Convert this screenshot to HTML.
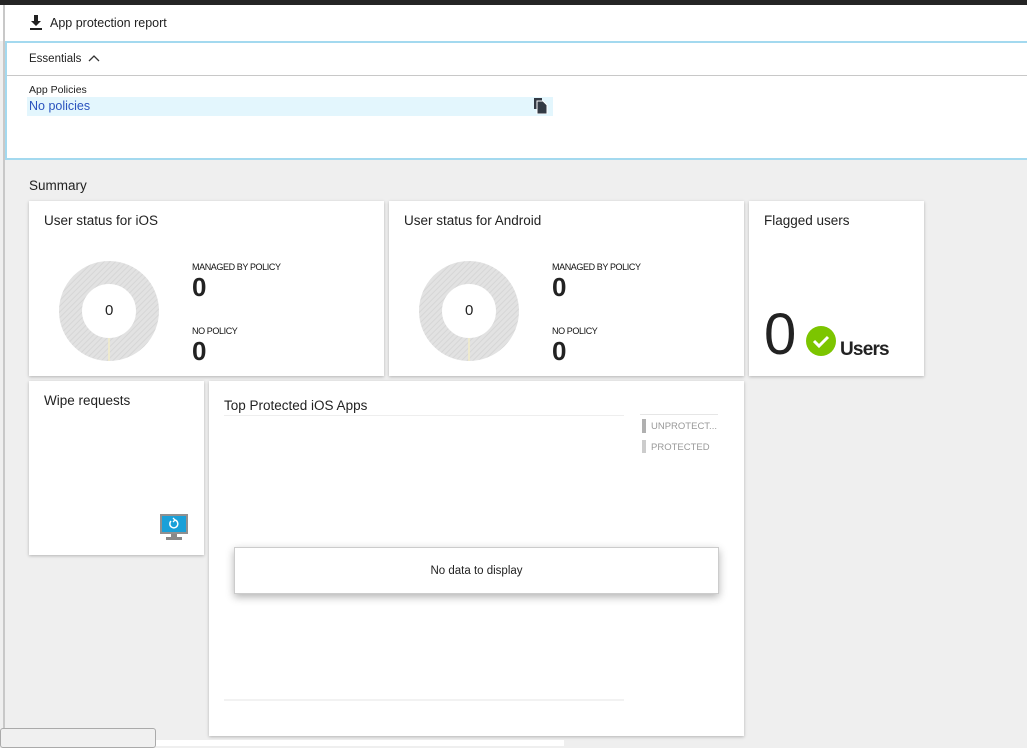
<!DOCTYPE html>
<html><head><meta charset="utf-8"><style>
*{box-sizing:border-box;margin:0;padding:0}
body{width:1027px;height:746px;overflow:hidden;background:#efefef;font-family:"Segoe UI","Liberation Sans",sans-serif;color:#222;position:relative}
.abs{position:absolute}
.card{position:absolute;background:#fff;box-shadow:0 1px 3px rgba(0,0,0,.25)}
.t{position:absolute;font-size:13.5px;color:#222}
.lbl{position:absolute;font-size:9px;letter-spacing:-.4px;color:#111}
.num{position:absolute;font-size:26px;font-weight:bold;color:#222;line-height:1}
</style></head><body>
<div class="abs" style="left:0;top:0;width:1027px;height:5px;background:#252525"></div>
<div class="abs" style="left:0;top:5px;width:1027px;height:36px;background:#fff"></div>
<div class="abs" style="left:3px;top:5px;width:2px;height:741px;background:#c8c8c8"></div>
<svg class="abs" style="left:29px;top:15px" width="14" height="16" viewBox="0 0 14 16"><path d="M5 0h4v6h3l-5 5-5-5h3z" fill="#222"/><rect x="1" y="13" width="12" height="2" fill="#222"/></svg>
<div class="t" style="left:50px;top:16px;font-size:12.5px">App protection report</div>
<div class="abs" style="left:5px;top:41px;width:1022px;height:119px;background:#fff;border:2px solid #a3d9ef;border-right:none"></div>
<div class="abs" style="left:7px;top:75px;width:1020px;height:1px;background:#c8c8c8"></div>
<div class="t" style="left:29px;top:53px;font-size:11.5px">Essentials</div>
<svg class="abs" style="left:88px;top:54px" width="12" height="8"><path d="M1 7L6 2l5 5" stroke="#333" stroke-width="1.3" fill="none"/></svg>
<div class="t" style="left:29px;top:84px;font-size:10.5px">App Policies</div>
<div class="abs" style="left:27px;top:97px;width:526px;height:19px;background:#e3f6fd"></div>
<div class="t" style="left:29px;top:99px;font-size:12.5px;color:#2a52be">No policies</div>
<svg class="abs" style="left:534px;top:98px" width="14" height="16"><rect x="0" y="0" width="8" height="11" fill="#333a44"/><path d="M3 3h6l4 4v9H3z" fill="#333a44" stroke="#fff" stroke-width="1"/></svg>
<div class="t" style="left:29px;top:178px;font-size:13.5px">Summary</div>

<div class="card" style="left:29px;top:201px;width:355px;height:175px"></div>
<div class="t" style="left:44px;top:213px">User status for iOS</div>
<svg class="abs" style="left:59px;top:261px" width="100" height="100"><defs><pattern id="h" width="4" height="4" patternUnits="userSpaceOnUse" patternTransform="rotate(45)"><rect width="4" height="4" fill="#e2e2e2"/><rect width="1" height="4" fill="#d6d6d6"/></pattern></defs><circle cx="50" cy="50" r="38.5" fill="none" stroke="url(#h)" stroke-width="23"/><line x1="50" y1="77" x2="50" y2="100" stroke="#f3ecc8" stroke-width="1.5"/></svg>
<div class="t" style="left:105px;top:302px;font-size:15px">0</div>
<div class="lbl" style="left:192px;top:262px">MANAGED BY POLICY</div>
<div class="num" style="left:192px;top:274px">0</div>
<div class="lbl" style="left:192px;top:326px">NO POLICY</div>
<div class="num" style="left:192px;top:338px">0</div>

<div class="card" style="left:389px;top:201px;width:355px;height:175px"></div>
<div class="t" style="left:404px;top:213px">User status for Android</div>
<svg class="abs" style="left:419px;top:261px" width="100" height="100"><circle cx="50" cy="50" r="38.5" fill="none" stroke="url(#h)" stroke-width="23"/><line x1="50" y1="77" x2="50" y2="100" stroke="#f3ecc8" stroke-width="1.5"/></svg>
<div class="t" style="left:465px;top:302px;font-size:15px">0</div>
<div class="lbl" style="left:552px;top:262px">MANAGED BY POLICY</div>
<div class="num" style="left:552px;top:274px">0</div>
<div class="lbl" style="left:552px;top:326px">NO POLICY</div>
<div class="num" style="left:552px;top:338px">0</div>

<div class="card" style="left:749px;top:201px;width:175px;height:175px"></div>
<div class="t" style="left:764px;top:213px">Flagged users</div>
<div class="abs" style="left:764px;top:306px;font-size:58px;line-height:1;color:#222">0</div>
<svg class="abs" style="left:806px;top:326px" width="30" height="30"><circle cx="15" cy="15" r="15" fill="#7cc500"/><path d="M8 15l5 5 9-9" stroke="#fff" stroke-width="3" fill="none"/></svg>
<div class="abs" style="left:840px;top:339px;font-size:19px;font-weight:bold;letter-spacing:-.8px;color:#222">Users</div>

<div class="card" style="left:29px;top:381px;width:175px;height:174px"></div>
<div class="t" style="left:44px;top:393px">Wipe requests</div>
<svg class="abs" style="left:159px;top:513px" width="30" height="28"><rect x="1" y="1" width="28" height="20" fill="#909090"/><rect x="3" y="3" width="24" height="16" fill="#1aa0d8"/><rect x="12" y="21" width="6" height="3" fill="#888"/><rect x="7" y="24" width="16" height="3" fill="#888"/><path d="M12 8a4 4 0 1 0 4-1" stroke="#fff" stroke-width="1.5" fill="none"/><path d="M14 5l2 2-2 2" stroke="#fff" stroke-width="1.3" fill="none"/></svg>

<div class="card" style="left:209px;top:381px;width:535px;height:355px"></div>
<div class="t" style="left:224px;top:398px">Top Protected iOS Apps</div>
<div class="abs" style="left:224px;top:415px;width:400px;height:1px;background:#eee"></div>
<div class="abs" style="left:640px;top:414px;width:78px;height:1px;background:#e6e6e6"></div>
<div class="abs" style="left:642px;top:419px;width:4px;height:14px;background:#b0b0b0"></div>
<div class="abs" style="left:651px;top:421px;font-size:9.5px;color:#999">UNPROTECT...</div>
<div class="abs" style="left:642px;top:440px;width:4px;height:13px;background:#ccc"></div>
<div class="abs" style="left:651px;top:442px;font-size:9.5px;color:#999">PROTECTED</div>
<div class="abs" style="left:224px;top:699px;width:400px;height:2px;background:#f2f2f2"></div>
<div class="abs" style="left:234px;top:547px;width:485px;height:47px;background:#fff;border:1px solid #ccc;box-shadow:0 3px 8px rgba(0,0,0,.3)"></div>
<div class="abs" style="left:234px;top:565px;width:485px;text-align:center;font-size:11.5px;color:#222">No data to display</div>

<div class="abs" style="left:0;top:728px;width:156px;height:20px;background:#f0f0f0;border:1px solid #aaa;border-radius:3px"></div>
<div class="abs" style="left:156px;top:740px;width:408px;height:6px;background:#fff"></div>
</body></html>
